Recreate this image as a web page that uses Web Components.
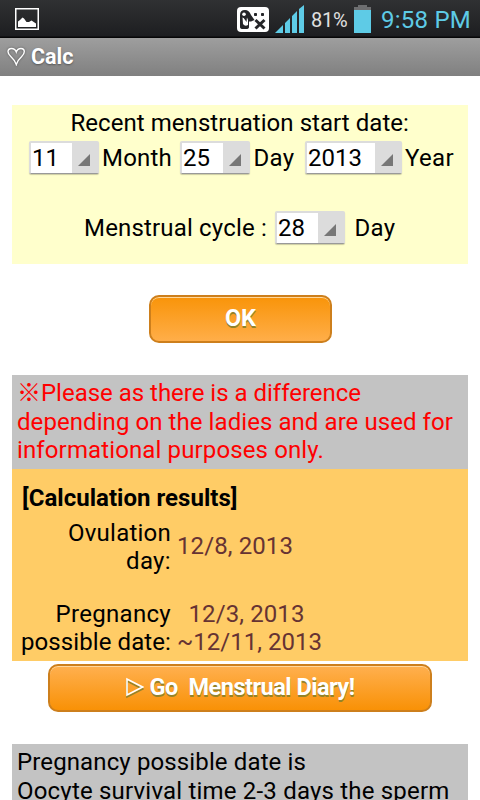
<!DOCTYPE html>
<html lang="en">
<head>
<meta charset="utf-8">
<title>Calc</title>
<style>
html,body{margin:0;background:#fff}
body{width:480px;height:800px;overflow:hidden;font-family:Roboto,"Noto Sans CJK JP",sans-serif;font-size:24px;line-height:28px;color:#000}
</style>
</head>
<body>
<calc-app></calc-app>
<script>
const define = (name, markup, setup) => {
  const t = document.createElement('template');
  t.innerHTML = markup;
  customElements.define(name, class extends HTMLElement {
    constructor() {
      super();
      this.attachShadow({mode: 'open'}).append(t.content.cloneNode(true));
    }
    connectedCallback() { if (setup) setup(this); }
  });
};

/* One line of text, tracked so that it spans the width given in "w". */
define('text-run', `<style>:host{display:block;white-space:pre;width:max-content}</style><slot></slot>`, el => {
  const w = +el.getAttribute('w');
  el.style.letterSpacing = '0px';
  const natural = el.getBoundingClientRect().width;
  const gap = (w - natural) / el.textContent.length;
  el.style.letterSpacing = gap.toFixed(3) + 'px';
});

define('status-bar', `<style>
:host{display:flex;height:38px;box-sizing:border-box;background:linear-gradient(#303133,#1d1e21 36px,#060607 37px);color:#5ecbe6;align-items:flex-start}
svg{display:block;flex:none}
.photo{margin:8px 0 0 15px}.mask{margin:7px 0 0 198px}.signal{margin:5px 0 0 6px}
.pct{color:#e0e0e0;font-size:20px;margin:6px 0 0 7px;width:36px}
.bat{margin:5px 0 0 7px}.time{margin:6px 0 0 10px}
</style>
<svg class="photo" width="24" height="22"><path d="M.75 .75H23.25V21.25H.75Z" fill="none" stroke="#fff" stroke-width="1.5"/><path d="M3 19V13.5L5 12L7.5 9.5L9 10.5L11.5 14L14 14L16.5 12.5L21 15.5V19Z" fill="#fff"/></svg>
<svg class="mask" width="32" height="25"><rect width="32" height="25" rx="4" fill="#fff"/><path d="M3 20V8Q3 3 8 3Q12 3 14 8L17.5 13L14 14.5H12V20Q12 22 9 22H6Q3 22 3 20Z" fill="#242528"/><path d="M5.5 10.5Q8 12 10 10.5L11 13V18Q8 20 6 17Z" fill="#fff"/><path d="M6 10L10 10L9.5 15Z" fill="#242528"/><circle cx="7" cy="7.3" r="1.8" fill="#fff"/><rect x="17" y="6" width="3" height="3" rx=".8" fill="#242528"/><rect x="24" y="6" width="3" height="3" rx=".8" fill="#242528"/><path d="M18.5 13L27.5 21.5M27.5 13L18.5 21.5" stroke="#242528" stroke-width="3"/></svg>
<svg class="signal" width="29" height="28" fill="#5ecbe6"><path d="M0 28L8 20V28ZM10 28V18L15 13V28ZM17 28V11L22 6V28ZM24 28V4L29 0V28Z"/></svg>
<div class="pct"><text-run w="36.5">81%</text-run></div>
<svg class="bat" width="17" height="28"><path d="M4 0H13V2H17V5H0V2H4Z" fill="#6d6e70"/><path d="M0 5H17V28H0Z" fill="#5ecbe6"/></svg>
<div class="time"><text-run w="90">9:58 PM</text-run></div>`);

define('title-bar', `<style>
:host{display:flex;height:38px;align-items:flex-start;background:linear-gradient(#9e9e9e,#808080);color:#fff;font-size:21.5px;font-weight:700;text-shadow:0 1px 2px #555}
svg{margin:9px 0 0 7px;filter:drop-shadow(0 0 1px #555);flex:none}
text-run{margin:5px 0 0 6px}
</style>
<svg width="18" height="19"><path d="M9.3 17.5Q8 13.5 4 9.8Q1 7 1 4.8Q1 1.5 4.5 1.5Q8 1.5 9.3 5Q10.5 1.5 14 1.5Q17.3 1.5 17.3 4.8Q17.3 7 14.5 9.8Q10.5 13.5 9.3 17.5Z" fill="none" stroke="#fff" stroke-width="1.4"/></svg>
<text-run w="39.5"><slot></slot></text-run>`);

define('select-box', `<style>
:host{display:flex;box-sizing:border-box;height:33px;border:solid #dcdcdc;border-width:2px 1px 1px 2px;border-bottom-color:#999;border-radius:2px;background:#fff;box-shadow:0 1px 1px rgba(0,0,0,.2);justify-content:space-between;flex:none}
.val{padding:1px 0 0 1px}
.arrow{width:26px;background:#dcdcdc;flex:none}
svg{display:block;margin:11px 0 0 6px}
</style><div class="val"><slot></slot></div><div class="arrow"><svg width="12" height="12"><path d="M12 0V12H0Z" fill="#777"/></svg></div>`);

define('cycle-form', `<style>
:host{display:block;box-sizing:border-box;height:159px;padding-top:4px;background:#ffc}
.head{padding-left:58.5px}.row{display:flex;height:33px;margin-top:4px;padding-left:17px}
.row>text-run{margin-top:3px}
.second{margin-top:37px;padding-left:70px}
</style>
<div class="head"><text-run w="338.5">Recent menstruation start date:</text-run></div>
<div class="row">
<select-box style="width:70px"><text-run w="27">11</text-run></select-box><text-run w="70" style="margin-left:3px">Month</text-run>
<select-box style="width:70px;margin-left:8px"><text-run w="27">25</text-run></select-box><text-run w="41" style="margin-left:3.5px">Day</text-run>
<select-box style="width:97px;margin-left:10.5px"><text-run w="54">2013</text-run></select-box><text-run w="49" style="margin-left:3px">Year</text-run>
</div>
<div class="row second">
<text-run w="183" style="margin-left:2px">Menstrual cycle :</text-run><select-box style="width:70px;margin-left:8px"><text-run w="27">28</text-run></select-box><text-run w="41" style="margin-left:9.5px">Day</text-run>
</div>`);

define('glossy-button', `<style>
:host{display:flex;box-sizing:border-box;height:48px;border:2px solid #cd7f1c;border-radius:10px;background:linear-gradient(var(--from),var(--to));box-shadow:inset 0 1px 0 #ffd79b;color:#fff;font-weight:700;font-size:23.5px;text-shadow:0 2px 0 #94832a;justify-content:center;padding-top:7px}
</style><slot></slot>`);

define('note-box', `<style>:host{display:block;box-sizing:border-box;padding:4px 0 0 5px;background:#c3c3c3;overflow:hidden}</style><slot></slot>`);

define('result-panel', `<style>
:host{display:block;box-sizing:border-box;height:192px;background:#fc6;padding-top:15px}
.title{font-weight:700;padding-left:10px}
.grid{display:grid;grid-template-columns:159px 1fr;column-gap:6px;margin-top:7px;row-gap:25px;align-items:center}
.label text-run{margin-left:auto}.value{color:#633}
.single{padding-bottom:2px}
</style>
<div class="title"><text-run w="215.5">[Calculation results]</text-run></div>
<div class="grid">
<div class="label"><text-run w="103">Ovulation</text-run><text-run w="45">day:</text-run></div>
<div class="value single"><text-run w="116">12/8, 2013</text-run></div>
<div class="label"><text-run w="115.5">Pregnancy</text-run><text-run w="150">possible date:</text-run></div>
<div class="value"><text-run w="116" style="margin-left:11.5px">12/3, 2013</text-run><text-run w="145">~12/11, 2013</text-run></div>
</div>`);

define('calc-app', `<style>
:host{display:block;height:800px;overflow:hidden;background:#fff}
main{padding:29px 12px 0;display:flex;flex-direction:column}
.ok{width:183px;margin:31px 0 0 137px;--from:#f99409;--to:#ffae49}
.diary{width:384px;margin:3px 0 0 36px;--from:#ffb04f;--to:#f99106}
.warn{height:94px;margin-top:32px;color:red}
.info{height:80px;margin-top:32px}
.gap{margin-top:1px}
.play{flex:none;margin:4px 6px 0 0;filter:drop-shadow(0 2px 0 #94832a)}
</style>
<status-bar></status-bar>
<title-bar>Calc</title-bar>
<main>
<cycle-form></cycle-form>
<glossy-button class="ok"><text-run w="31">OK</text-run></glossy-button>
<note-box class="warn"><text-run w="344">※Please as there is a difference</text-run><text-run class="gap" w="436">depending on the ladies and are used for</text-run><text-run w="307">informational purposes only.</text-run></note-box>
<result-panel></result-panel>
<glossy-button class="diary"><svg class="play" width="18" height="20"><path d="M1 2V18L16.5 10Z" fill="none" stroke="#fff" stroke-width="1.6"/></svg><text-run w="205">Go  Menstrual Diary!</text-run></glossy-button>
<note-box class="info"><text-run w="289">Pregnancy possible date is</text-run><text-run class="gap" w="432.5">Oocyte survival time 2-3 days the sperm</text-run></note-box>
</main>`);
</script>
</body>
</html>
